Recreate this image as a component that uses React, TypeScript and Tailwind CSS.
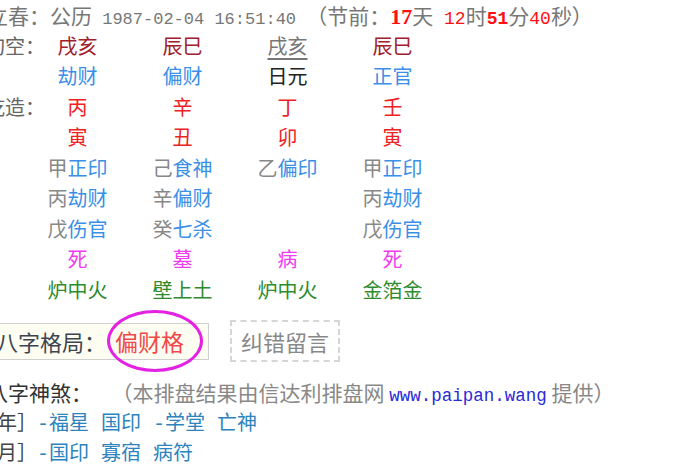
const CJK = "font-['Noto_Sans_CJK_SC',sans-serif]"
const MONO = "font-['Liberation_Mono',monospace]"

type Cell = React.ReactNode

const Hidden = ({ stem, god }: { stem: string; god: string }) => (
  <span>
    <span className="text-[#888]">{stem}</span>
    <span className="text-[#3b8fe6]">{god}</span>
  </span>
)

function Row({ label, cells, className = '' }: { label?: string; cells: Cell[]; className?: string }) {
  return (
    <div className={`grid grid-cols-[40px_105px_105px_105px_105px] h-[30.5px] leading-[30.5px] ${className}`}>
      <div className="whitespace-nowrap text-[#666]">{label}</div>
      {cells.map((c, i) => (
        <div key={i} className="text-center whitespace-nowrap">{c}</div>
      ))}
    </div>
  )
}

export default function App() {
  return (
    <div className={`w-[700px] h-[470px] overflow-hidden bg-white text-[20px] ${CJK}`}>
      <div className="ml-[-15px]">
        {/* 立春 line */}
        <div className="h-[30.5px] leading-[30.5px] whitespace-nowrap text-[#777] text-[21px] ml-[2px]">
          <span>立春：公历</span>
          <span className={`${MONO} text-[17px]`}> 1987-02-04 16:51:40 </span>
          <span>（节前：</span>
          <span className="font-['Liberation_Serif',serif] font-bold text-[#ff1010] text-[22px]">17</span>
          <span>天</span>
          <span className={`${MONO} text-[18px] text-[#ff1010]`}> 12</span>
          <span>时</span>
          <span className={`${MONO} text-[18px] font-bold text-[#ff1010]`}>51</span>
          <span>分</span>
          <span className={`${MONO} text-[18px] text-[#ff1010]`}>40</span>
          <span>秒）</span>
        </div>

        <Row
          label="旬空："
          cells={[
            <span className="text-[#a0202c]">戌亥</span>,
            <span className="text-[#a0202c]">辰巳</span>,
            <span className="text-[#777] underline underline-offset-4">戌亥</span>,
            <span className="text-[#a0202c]">辰巳</span>,
          ]}
        />
        <Row
          cells={[
            <span className="text-[#3b8fe6]">劫财</span>,
            <span className="text-[#3b8fe6]">偏财</span>,
            <span className="text-[#222]">日元</span>,
            <span className="text-[#3b8fe6]">正官</span>,
          ]}
        />
        <Row
          label="乾造："
          className="text-[#ee2222]"
          cells={['丙', '辛', '丁', '壬']}
        />
        <Row className="text-[#ee2222]" cells={['寅', '丑', '卯', '寅']} />
        <Row
          cells={[
            <Hidden stem="甲" god="正印" />,
            <Hidden stem="己" god="食神" />,
            <Hidden stem="乙" god="偏印" />,
            <Hidden stem="甲" god="正印" />,
          ]}
        />
        <Row
          cells={[
            <Hidden stem="丙" god="劫财" />,
            <Hidden stem="辛" god="偏财" />,
            '',
            <Hidden stem="丙" god="劫财" />,
          ]}
        />
        <Row
          cells={[
            <Hidden stem="戊" god="伤官" />,
            <Hidden stem="癸" god="七杀" />,
            '',
            <Hidden stem="戊" god="伤官" />,
          ]}
        />
        <Row className="text-[#f03cf0]" cells={['死', '墓', '病', '死']} />
        <Row className="text-[#2e8b2e]" cells={['炉中火', '壁上土', '炉中火', '金箔金']} />
      </div>

      {/* 格局 */}
      <div className="relative ml-[-10px] mt-[15px] h-[42px] flex items-center">
        <div className="h-[37px] flex items-center bg-[#fdfdf2] border border-[#cfcfcf] pl-[5px] pr-[24px] text-[22px] leading-none">
          <span className="text-[#3d4450]">八字格局：</span>
          <span className="ml-[9px] text-[#f04848] text-[23px]">偏财格</span>
        </div>
        <div className="ml-[21px] h-[42px] w-[110px] flex items-center justify-center border-2 border-dashed border-[#d6d6d6] text-[22px] text-[#888] leading-none">
          纠错留言
        </div>
        <div className="absolute left-[117px] top-[-10px] w-[96px] h-[62px] rounded-[50%] border-[3px] border-[#e322e3]" />
      </div>

      {/* 神煞 */}
      <div className="mt-[15px]">
        <div className="h-[30px] leading-[30px] whitespace-nowrap ml-[-13px] text-[21px]">
          <span className="text-[#333]">八字神煞：</span>
          <span className="ml-[30px] text-[#888]">（本排盘结果由信达利排盘网 </span>
          <span className={`${MONO} text-[17.5px] text-[#2a2ad6]`}>www.paipan.wang</span>
          <span className="text-[#888]"> 提供）</span>
        </div>
        <div className="h-[30px] leading-[30px] whitespace-nowrap ml-[-3px] flex">
          <span className="text-[#444]">年］</span>
          <div className="flex gap-[12px] text-[#2c83bd]">
            <span><span className={MONO}>-</span>福星</span>
            <span>国印</span>
            <span><span className={MONO}>-</span>学堂</span>
            <span>亡神</span>
          </div>
        </div>
        <div className="h-[30px] leading-[30px] whitespace-nowrap ml-[-3px] flex">
          <span className="text-[#444]">月］</span>
          <div className="flex gap-[12px] text-[#2c83bd]">
            <span><span className={MONO}>-</span>国印</span>
            <span>寡宿</span>
            <span>病符</span>
          </div>
        </div>
      </div>
    </div>
  )
}
